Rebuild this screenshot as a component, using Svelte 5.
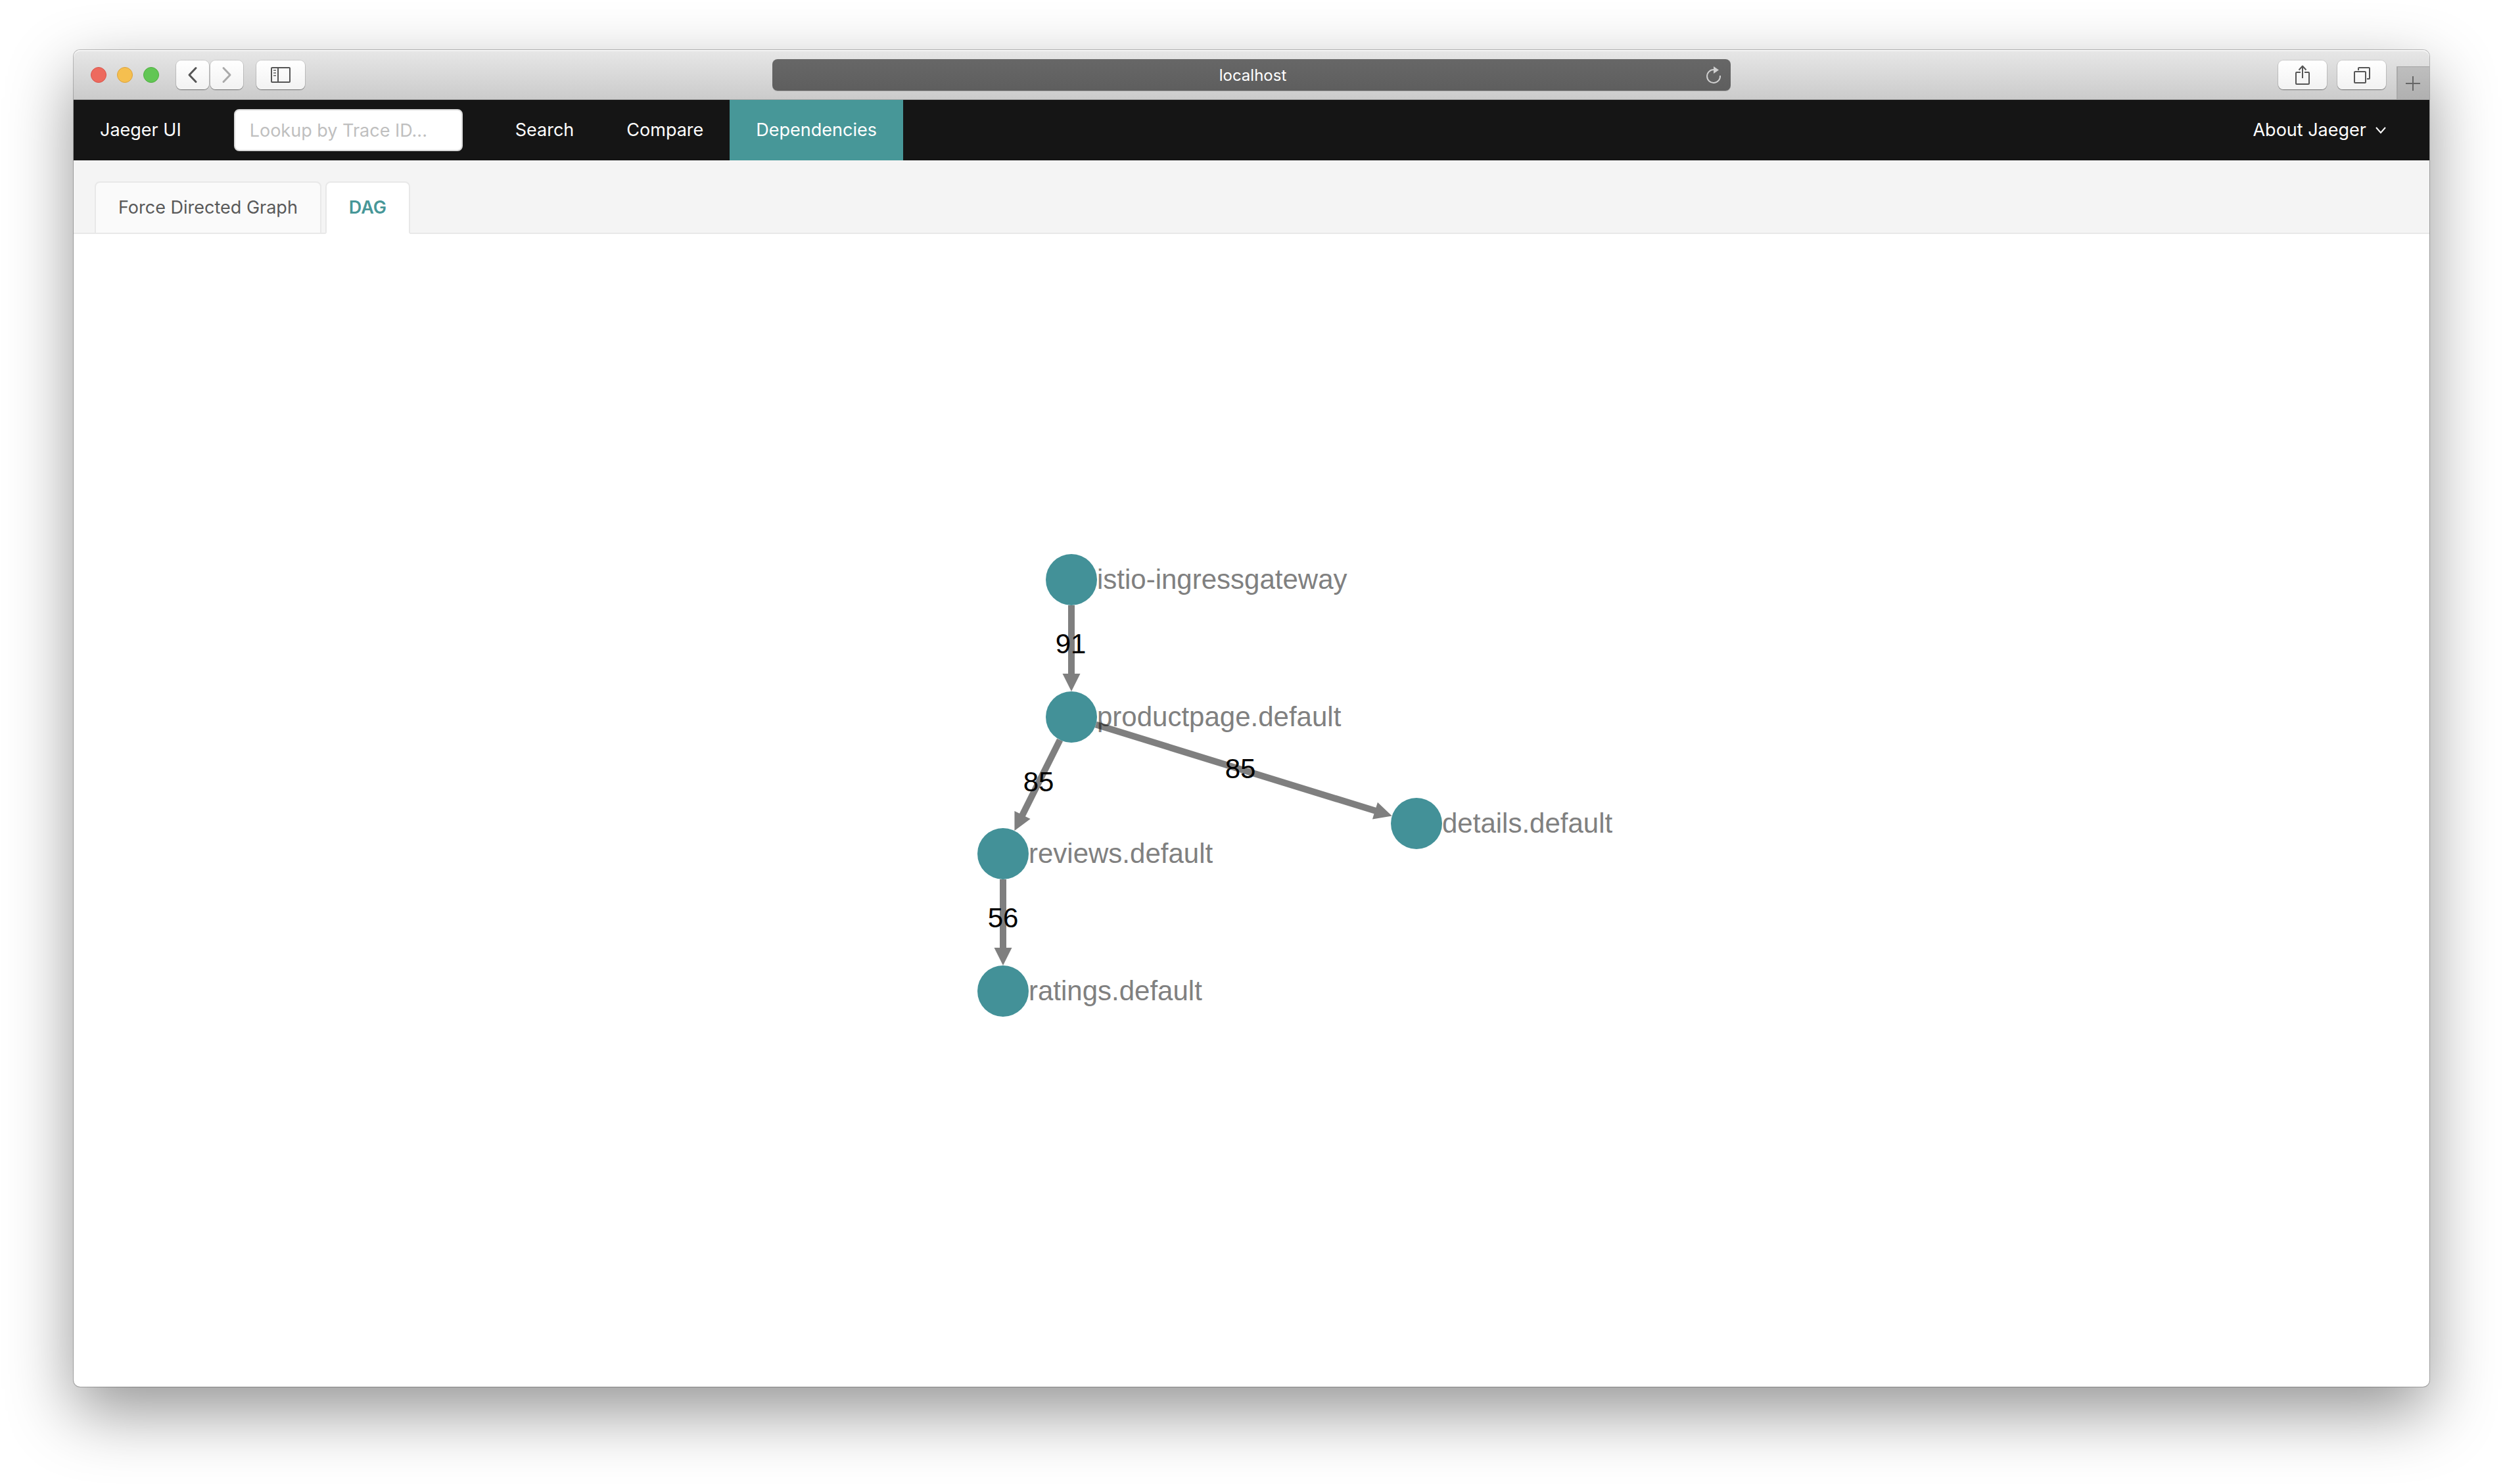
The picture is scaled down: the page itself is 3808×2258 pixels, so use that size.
<script>
  const RADIUS = 39;
  const HEAD = 27;
  const SHAFT = 5;

  const nodes = {
    gateway: { name: 'istio-ingressgateway', x: 1518, y: 526 },
    product: { name: 'productpage.default', x: 1518, y: 735 },
    details: { name: 'details.default', x: 2043, y: 897 },
    reviews: { name: 'reviews.default', x: 1414, y: 943 },
    ratings: { name: 'ratings.default', x: 1414, y: 1152 }
  };

  const calls = [
    { from: 'gateway', to: 'product', count: 91, x: 1517, y: 638 },
    { from: 'product', to: 'reviews', count: 85, x: 1468, y: 848 },
    { from: 'product', to: 'details', count: 85, x: 1775, y: 828 },
    { from: 'reviews', to: 'ratings', count: 56, x: 1414, y: 1055 }
  ];

  // One outline for shaft and head, so that the translucent fill stays even.
  function arrow(call) {
    const a = nodes[call.from];
    const b = nodes[call.to];
    const length = Math.hypot(b.x - a.x, b.y - a.y);
    const ux = (b.x - a.x) / length;
    const uy = (b.y - a.y) / length;
    const at = (along, side) =>
      `${a.x + ux * along - uy * side},${a.y + uy * along + ux * side}`;
    const tip = length - RADIUS;
    const neck = tip - HEAD;
    const start = RADIUS;
    return [
      at(start, SHAFT), at(neck, SHAFT), at(neck, HEAD / 2), at(tip, 0),
      at(neck, -HEAD / 2), at(neck, -SHAFT), at(start, -SHAFT)
    ].join(' ');
  }

  const links = ['Search', 'Compare', 'Dependencies'];
  const tabs = ['Force Directed Graph', 'DAG'];
  let activeTab = $state('DAG');
</script>

<div class="desktop">
  <div class="window">
    <div class="toolbar">
      <div class="left">
        <div class="lights">
          <button class="light close" aria-label="Close"></button>
          <button class="light minimise" aria-label="Minimise"></button>
          <button class="light zoom" aria-label="Zoom"></button>
        </div>
        <div class="history">
          <button class="tool narrow" aria-label="Back">
            <svg width="16" height="28" viewBox="0 0 16 28"><path d="M13 3.500 3 14l10 10.500" stroke="#555" stroke-width="3" /></svg>
          </button>
          <button class="tool narrow" aria-label="Forward">
            <svg width="16" height="28" viewBox="0 0 16 28"><path d="M3 3.500 13 14 3 24.500" stroke="#aaa" stroke-width="3" /></svg>
          </button>
        </div>
        <button class="tool" aria-label="Show sidebar">
          <svg width="30" height="24" viewBox="0 0 30 24" stroke="#555" stroke-width="2">
            <rect x="1" y="1" width="28" height="22" rx="1" />
            <path d="M11 1v22" />
            <path d="M4 5h4M4 9h4M4 13h4" stroke="#888" stroke-linecap="butt" />
          </svg>
        </button>
      </div>
      <div class="address">
        <input type="text" value="localhost" aria-label="Address" />
        <button class="reload" aria-label="Reload">
          <svg width="24" height="28" viewBox="0 0 24 28">
            <path d="M22 15A10 10 0 1 1 12 6" stroke="#d0d0d0" stroke-width="2" stroke-linecap="butt" />
            <path d="M12 1v11l8-5.500z" fill="#d0d0d0" />
          </svg>
        </button>
      </div>
      <div class="right">
        <button class="tool" aria-label="Share">
          <svg width="24" height="32" viewBox="0 0 24 32" stroke="#555" stroke-width="2">
            <path d="M9 12H3a1 1 0 0 0-1 1v16a1 1 0 0 0 1 1h18a1 1 0 0 0 1-1V13a1 1 0 0 0-1-1h-6" stroke-linecap="butt" />
            <path d="M12 21V3M6.500 8.500 12 2.500l5.500 6" stroke-linecap="butt" />
          </svg>
        </button>
        <button class="tool" aria-label="Show all tabs">
          <svg width="26" height="26" viewBox="0 0 26 26" stroke="#555" stroke-width="2">
            <rect x="2" y="8" width="17" height="17" rx="1" />
            <path d="M8 6V3a1 1 0 0 1 1-1h15a1 1 0 0 1 1 1v15a1 1 0 0 1-1 1h-3" stroke-linecap="butt" />
          </svg>
        </button>
        <button class="new-tab" aria-label="New tab">
          <svg width="22" height="22" viewBox="0 0 22 22"><path d="M11 0v22M0 11h22" stroke="#666" stroke-width="2" stroke-linecap="butt" /></svg>
        </button>
      </div>
    </div>

    <header>
      <a class="brand" href="#home">Jaeger UI</a>
      <input class="lookup" type="text" placeholder="Lookup by Trace ID..." aria-label="Lookup by Trace ID" />
      <nav>
        {#each links as link}
          <a href={'#' + link.toLowerCase()} class:current={link === 'Dependencies'}>{link}</a>
        {/each}
      </nav>
      <button class="about" aria-haspopup="menu">
        About Jaeger
        <svg width="16" height="12" viewBox="0 0 16 12"><path d="M1 2 8 10l7-8" stroke="#fff" stroke-width="2" stroke-linecap="butt" stroke-linejoin="miter" /></svg>
      </button>
    </header>

    <div class="tabs" role="tablist">
      {#each tabs as tab}
        <button
          role="tab"
          class="tab"
          class:active={tab === activeTab}
          aria-selected={tab === activeTab}
          onclick={() => (activeTab = tab)}>{tab}</button>
      {/each}
    </div>

    <main>
      <svg class="graph" viewBox="0 0 3584 1754" role="img" aria-label="Service dependencies">
        {#each Object.values(nodes) as node}
          <circle cx={node.x} cy={node.y} r={RADIUS} />
          <text class="name" x={node.x + RADIUS} y={node.y + 14}>{node.name}</text>
        {/each}
        {#each calls as call}
          <polygon points={arrow(call)} />
          <text class="count" x={call.x} y={call.y}>{call.count}</text>
        {/each}
      </svg>
    </main>
  </div>
</div>

<style>
  :global(body) {
    margin: 0;
    background: #fff;
  }

  .desktop {
    box-sizing: border-box;
    min-height: 100vh;
    padding: 76px 112px 148px;
    overflow: hidden;
    font-family: Inter, 'Liberation Sans', sans-serif;
    font-size: 27px;
    line-height: 36px;
  }

  button,
  input {
    box-sizing: border-box;
    margin: 0;
    padding: 0;
    border: 0;
    font: inherit;
  }

  a {
    color: inherit;
    text-decoration: none;
  }

  svg {
    display: block;
    fill: none;
    stroke-linecap: round;
    stroke-linejoin: round;
  }

  .window {
    border-radius: 10px;
    background: #fff;
    box-shadow:
      0 0 0 1px rgba(0, 0, 0, 0.24),
      0 38px 100px rgba(0, 0, 0, 0.42);
  }

  .toolbar {
    box-sizing: border-box;
    display: grid;
    grid-template-columns: 1fr minmax(0, 1458px) 1fr;
    align-items: center;
    height: 76px;
    border-bottom: 1px solid #a4a4a4;
    border-radius: 10px 10px 0 0;
    background: linear-gradient(#e7e7e7, #cbcbcb);
    box-shadow: inset 0 2px 0 #f4f4f4;
  }

  .left,
  .right,
  .lights,
  .history {
    display: flex;
    align-items: center;
  }

  .left {
    gap: 20px;
    padding-left: 26px;
  }

  .lights {
    gap: 16px;
    margin-right: 6px;
  }

  .light {
    width: 24px;
    height: 24px;
    border: 1px solid #d9554b;
    border-radius: 50%;
    background: #ed6a5e;
  }

  .minimise {
    border-color: #dca23c;
    background: #f5bf4f;
  }

  .zoom {
    border-color: #4fae3f;
    background: #61c654;
  }

  .history {
    gap: 2px;
  }

  .tool {
    display: flex;
    align-items: center;
    justify-content: center;
    width: 74px;
    height: 44px;
    border-radius: 8px;
    background: linear-gradient(#fff, #f2f2f2);
    box-shadow:
      0 0 0 1px rgba(0, 0, 0, 0.1),
      0 1px 1px rgba(0, 0, 0, 0.4);
  }

  .narrow {
    width: 50px;
  }

  .address {
    display: flex;
    align-items: center;
    height: 48px;
    border-radius: 8px;
    background: linear-gradient(#676767, #5e5e5e);
    box-shadow: 0 1px 0 #b0b0b0;
  }

  .address input {
    flex: 1;
    min-width: 0;
    height: 48px;
    padding: 2px 0 0 56px;
    background: none;
    color: #fff;
    font-size: 24px;
    text-align: center;
  }

  .reload {
    width: 24px;
    margin: 0 14px;
    background: none;
  }

  .right {
    justify-content: flex-end;
    align-self: stretch;
    gap: 16px;
  }

  .new-tab {
    display: flex;
    align-items: center;
    justify-content: center;
    align-self: flex-end;
    width: 50px;
    height: 50px;
    padding-right: 2px;
    border-top: 1px solid #a4a4a4;
    border-left: 2px solid #a9a9a9;
    background: linear-gradient(#bebebe, #b0b0b0);
  }

  header {
    display: flex;
    align-items: center;
    height: 92px;
    background: #151515;
    color: #fff;
  }

  .brand {
    padding: 0 40px;
  }

  .lookup {
    width: 348px;
    height: 64px;
    margin: 0 40px;
    padding: 0 22px;
    border: 2px solid #d9d9d9;
    border-radius: 8px;
    background: #fff;
    color: #555;
  }

  .lookup::placeholder {
    color: #bfbfbf;
    opacity: 1;
  }

  nav {
    display: flex;
  }

  nav a {
    padding: 0 40px;
    line-height: 92px;
  }

  nav .current {
    background: #479798;
  }

  .about {
    display: flex;
    align-items: center;
    gap: 14px;
    margin-left: auto;
    padding: 0 66px 0 40px;
    background: none;
    color: #fff;
  }

  .tabs {
    display: flex;
    gap: 6px;
    height: 80px;
    padding: 32px 32px 0;
    background: #f4f4f4;
    box-shadow: inset 0 -2px 0 #e8e8e8;
  }

  .tab {
    height: 80px;
    padding: 0 34px;
    border: 2px solid #e8e8e8;
    border-radius: 8px 8px 0 0;
    background: #fafafa;
    color: #595959;
  }

  .active {
    border-bottom-color: #fff;
    background: #fff;
    color: #479798;
    font-weight: 600;
  }

  .graph {
    width: 100%;
    height: auto;
  }

  .graph circle {
    fill: #439198;
  }

  .graph polygon {
    fill: #000;
    fill-opacity: 0.5;
  }

  .graph text {
    font-family: 'Liberation Sans', Arial, sans-serif;
    font-size: 42px;
  }

  .name {
    fill: #808080;
  }

  .graph .count {
    fill: #000;
    text-anchor: middle;
  }
</style>
